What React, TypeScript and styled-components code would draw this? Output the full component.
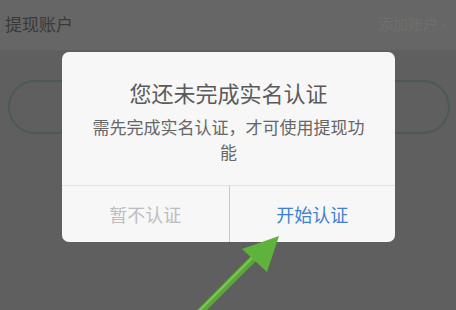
import React from 'react';
import styled, { createGlobalStyle } from 'styled-components';

const GlobalStyle = createGlobalStyle`
  html, body {
    margin: 0;
    padding: 0;
    background: #5f5f5f;
    font-family: "Noto Sans CJK SC", "Noto Sans", sans-serif;
  }
`;

const App = () => {
  return (
    <Screen>
      <GlobalStyle />
      <Header>
        <HeaderTitle>提现账户</HeaderTitle>
        <HeaderAction>添加账户 ›</HeaderAction>
      </Header>
      <Body>
        <PillButton />
      </Body>

      <Dialog>
        <DialogTitle>您还未完成实名认证</DialogTitle>
        <DialogText>需先完成实名认证，才可使用提现功能</DialogText>
        <ButtonRow>
          <DialogButton>暂不认证</DialogButton>
          <DialogButton primary>开始认证</DialogButton>
        </ButtonRow>
      </Dialog>

      <Arrow width="456" height="310" viewBox="0 0 456 310">
        <line x1="196" y1="316" x2="256" y2="256" stroke="#5aa83a" strokeWidth="7" />
        <line x1="198" y1="312" x2="254" y2="256" stroke="#7cc850" strokeWidth="2" />
        <polygon points="279,236 242,249 267,272" fill="#5fb23c" />
      </Arrow>
    </Screen>
  );
};

export default App;

const Screen = styled.div`
  position: relative;
  width: 456px;
  height: 310px;
  overflow: hidden;
  background: #5f5f5f;
`;

const Header = styled.div`
  display: flex;
  justify-content: space-between;
  align-items: center;
  height: 46px;
  padding: 0 10px 4px 5px;
  background: #666666;
`;

const HeaderTitle = styled.span`
  font-size: 17px;
  color: #3a3a3a;
`;

const HeaderAction = styled.span`
  font-size: 15px;
  color: #6f6f6f;
`;

const Body = styled.div`
  padding: 30px 6px 0 8px;
`;

const PillButton = styled.div`
  height: 50px;
  border: 2px solid #4b5957;
  border-radius: 27px;
`;

const Dialog = styled.div`
  position: absolute;
  left: 62px;
  top: 52px;
  width: 333px;
  height: 190px;
  display: flex;
  flex-direction: column;
  background: #f7f7f7;
  border-radius: 7px;
  overflow: hidden;
`;

const DialogTitle = styled.div`
  padding-top: 25px;
  font-size: 22px;
  line-height: 30px;
  color: #5a5a5a;
  text-align: center;
`;

const DialogText = styled.div`
  margin-top: 7px;
  padding: 0 26px;
  font-size: 17px;
  line-height: 25px;
  color: #666666;
  text-align: center;
`;

const ButtonRow = styled.div`
  margin-top: auto;
  display: grid;
  grid-template-columns: 1fr 1fr;
  height: 56px;
  border-top: 1px solid #e2e2e2;

  & > * + * {
    border-left: 1px solid #c8c8c8;
  }
`;

const DialogButton = styled.div<{ primary?: boolean }>`
  display: flex;
  align-items: center;
  justify-content: center;
  font-size: 18px;
  color: ${(p) => (p.primary ? '#3f7fd4' : '#bdbdbd')};
`;

const Arrow = styled.svg`
  position: absolute;
  left: 0;
  top: 0;
  pointer-events: none;
`;
